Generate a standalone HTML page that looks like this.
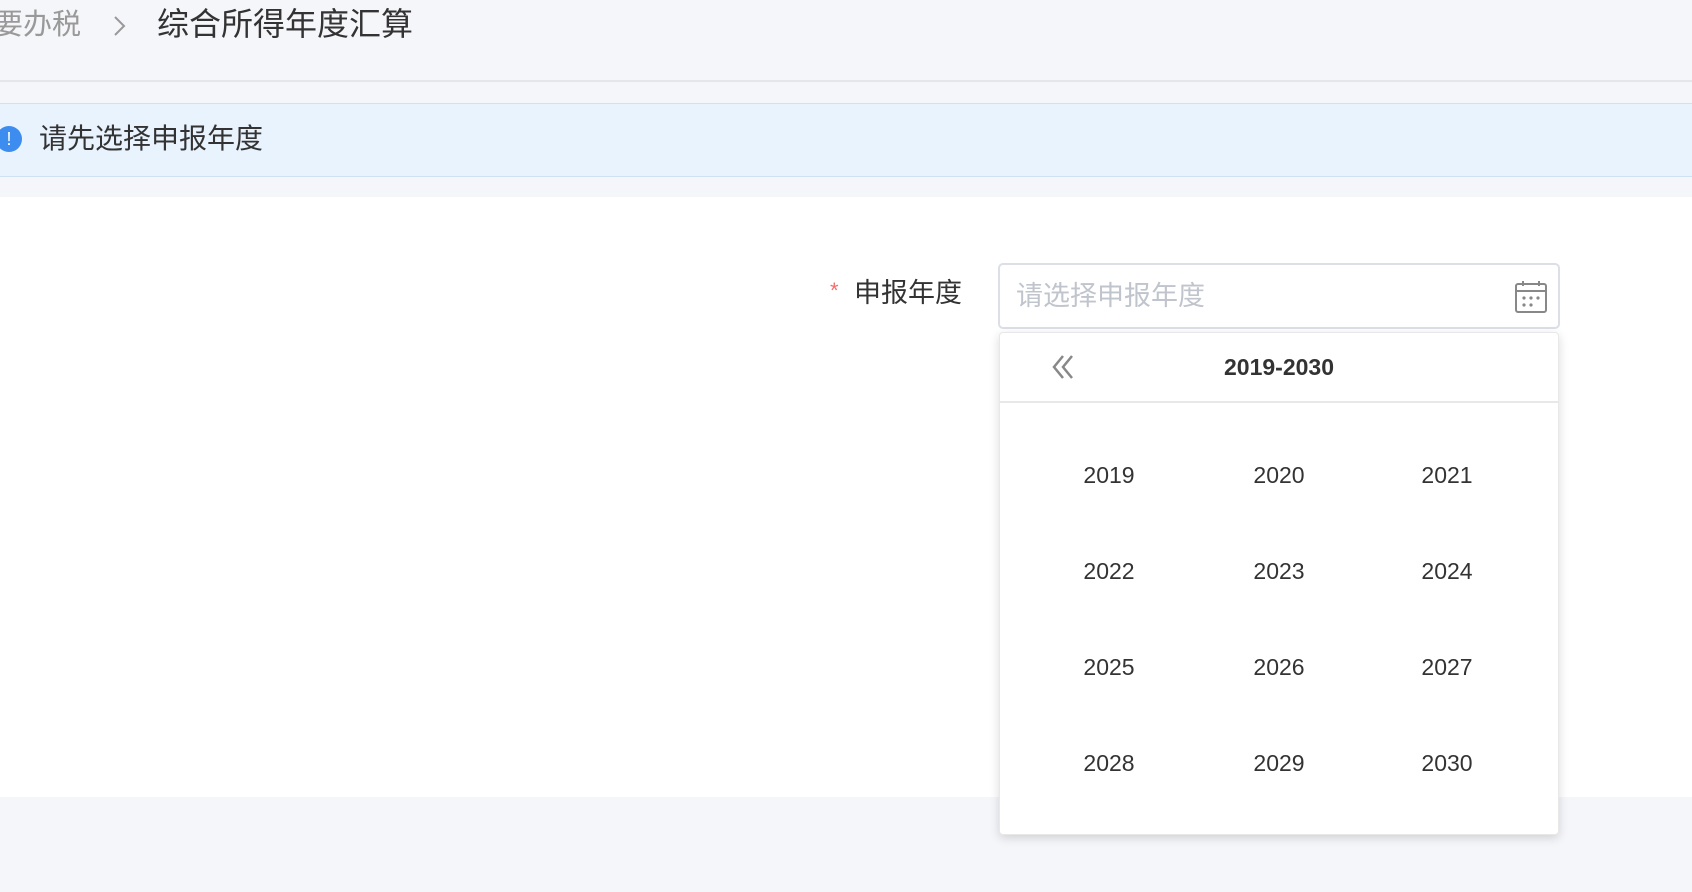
<!DOCTYPE html>
<html><head><meta charset="utf-8"><style>
*{margin:0;padding:0;box-sizing:border-box}
body{width:1692px;height:892px;background:#f5f6fa;position:relative;overflow:hidden;font-family:"Liberation Sans","Noto Sans CJK SC",sans-serif;color:#333}
.a{position:absolute;white-space:nowrap}
.yr{position:absolute;font-size:23px;color:#333;transform:translateX(-50%);line-height:26px}
</style></head><body>
<div class="a" style="left:-6px;top:6px;font-size:29px;color:#999;line-height:38px">要办税</div>
<svg class="a" style="left:112px;top:14px" width="16" height="24"><path d="M3 3 L12 12 L3 21" fill="none" stroke="#999" stroke-width="2"/></svg>
<div class="a" style="left:157px;top:5px;font-size:32px;color:#333;line-height:38px">综合所得年度汇算</div>
<div class="a" style="left:0;top:80px;width:1692px;height:2px;background:#e4e6ea"></div>
<div class="a" style="left:0;top:103px;width:1692px;height:74px;background:#e8f3fe;border-top:1px solid #cfe2f4;border-bottom:1px solid #cfe2f4"></div>
<div class="a" style="left:-4px;top:126px;width:26px;height:26px;border-radius:50%;background:#3d8cf0;color:#fff;font-size:18px;line-height:26px;text-align:center">!</div>
<div class="a" style="left:39px;top:122px;font-size:28px;line-height:34px;color:#333">请先选择申报年度</div>
<div class="a" style="left:0;top:197px;width:1692px;height:600px;background:#fff"></div>
<div class="a" style="left:830px;top:278px;font-size:22px;color:#f56c6c">*</div>
<div class="a" style="left:854px;top:276px;font-size:27px;line-height:34px;color:#333">申报年度</div>
<div class="a" style="left:998px;top:263px;width:562px;height:66px;border:2px solid #dcdfe6;border-radius:5px;background:#fff"></div>
<div class="a" style="left:1016px;top:279px;font-size:27px;line-height:34px;color:#c0c4cc">请选择申报年度</div>
<svg class="a" style="left:1514px;top:279px" width="34" height="35" viewBox="0 0 34 35"><rect x="2" y="5" width="30" height="28" rx="2" fill="none" stroke="#888" stroke-width="2"/><line x1="2" y1="12" x2="32" y2="12" stroke="#888" stroke-width="2"/><line x1="9" y1="2" x2="9" y2="7" stroke="#888" stroke-width="2"/><line x1="25" y1="2" x2="25" y2="7" stroke="#888" stroke-width="2"/><g fill="#888"><circle cx="10" cy="19" r="1.6"/><circle cx="17" cy="19" r="1.6"/><circle cx="24" cy="19" r="1.6"/><circle cx="10" cy="26" r="1.6"/><circle cx="17" cy="26" r="1.6"/></g></svg>
<div class="a" style="left:999px;top:332px;width:560px;height:503px;background:#fff;border-radius:4px;box-shadow:0 3px 10px rgba(0,0,0,.15);border:1px solid #e8e8e8"></div>
<div class="a" style="left:999px;top:401px;width:560px;height:2px;background:#e8e8e8"></div>
<svg class="a" style="left:1050px;top:353px" width="28" height="28"><path d="M13 3 L4 14 L13 25 M22 3 L13 14 L22 25" fill="none" stroke="#888" stroke-width="2.5"/></svg>
<div class="a" style="left:1279px;top:354px;transform:translateX(-50%);font-size:23px;font-weight:bold;color:#333;line-height:26px">2019-2030</div>
<div class="yr" style="left:1109px;top:462px">2019</div><div class="yr" style="left:1279px;top:462px">2020</div><div class="yr" style="left:1447px;top:462px">2021</div>
<div class="yr" style="left:1109px;top:558px">2022</div><div class="yr" style="left:1279px;top:558px">2023</div><div class="yr" style="left:1447px;top:558px">2024</div>
<div class="yr" style="left:1109px;top:654px">2025</div><div class="yr" style="left:1279px;top:654px">2026</div><div class="yr" style="left:1447px;top:654px">2027</div>
<div class="yr" style="left:1109px;top:750px">2028</div><div class="yr" style="left:1279px;top:750px">2029</div><div class="yr" style="left:1447px;top:750px">2030</div>
</body></html>
